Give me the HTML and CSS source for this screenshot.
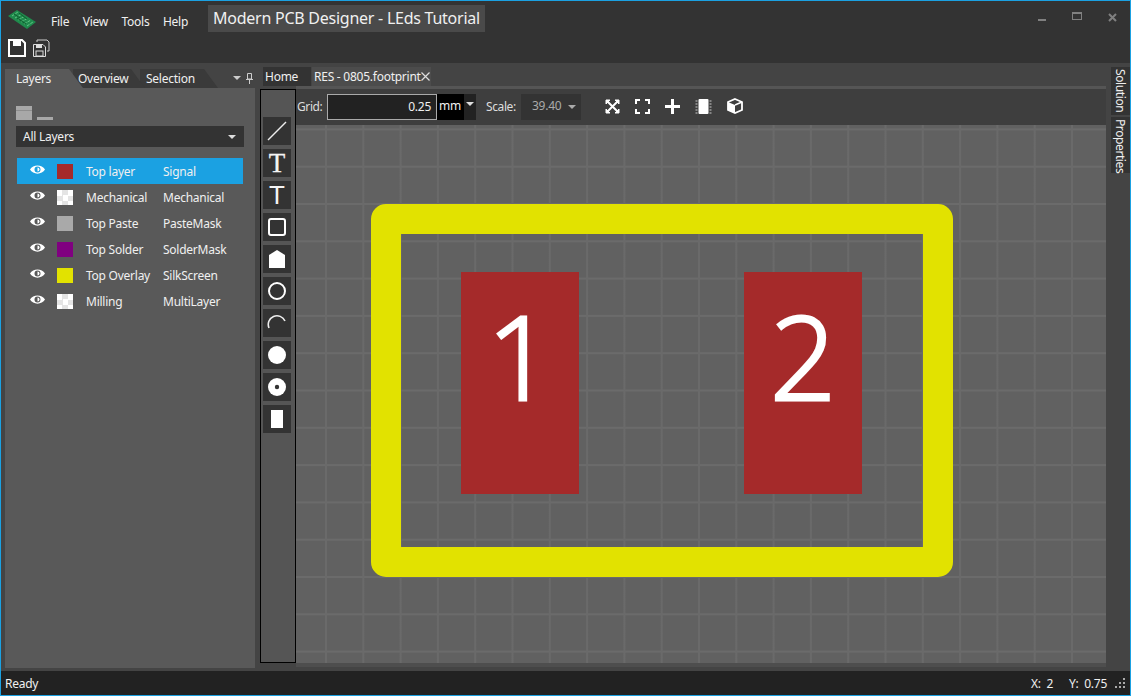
FILE: index.html

```html
<!DOCTYPE html>
<html lang="en">
<head>
    <meta charset="UTF-8">
    <title>Modern PCB Designer - LEds Tutorial</title>
    <link rel="stylesheet" href="styles.css">
</head>
<body>
<div class="window">
    <header class="titlebar">
        <div class="menu-row">
            <svg class="logo" width="28" height="19" viewBox="0 0 28 19">
                <polygon points="0,6 9,0 28,12 19,19" fill="#1f8a4c"/>
                <path d="M4,6 L10,2 M7,8 L14,4 M10,10 L17,6 M13,12 L20,8 M16,14 L23,10 M19,16 L25,12" stroke="#62c585" stroke-width="1" stroke-dasharray="3 1" fill="none"/>
                <path d="M6,4 L12,8 M11,3 L19,9 M9,8 L18,14" stroke="#0d5a2c" stroke-width="1" fill="none"/>
            </svg>
            <nav class="menu">
                <span>File</span>
                <span>View</span>
                <span>Tools</span>
                <span>Help</span>
            </nav>
            <div class="doc-title">Modern PCB Designer - LEds Tutorial</div>
            <div class="win-controls">
                <span class="win-min"></span>
                <span class="win-max"></span>
                <svg width="9" height="9" viewBox="0 0 9 9"><path d="M1,1 L8,8 M8,1 L1,8" stroke="#808080" stroke-width="2"/></svg>
            </div>
        </div>
        <div class="icon-row">
            <svg width="18" height="18" viewBox="0 0 18 18">
                <path d="M1,1 H14 L17,4 V17 H1 Z" fill="none" stroke="#fff" stroke-width="2"/>
                <rect x="5" y="1" width="8" height="6" fill="#fff"/>
            </svg>
            <svg width="18" height="18" viewBox="0 0 18 18">
                <path d="M5,3 V1 H15 L17,3 V12 H15" fill="none" stroke="#ccc"/>
                <path d="M1.5,5.5 H11 L13.5,8 V17.5 H1.5 Z" fill="none" stroke="#ddd"/>
                <rect x="4" y="5" width="6" height="4" fill="#ddd"/>
                <rect x="4" y="12" width="7" height="5" fill="none" stroke="#ddd"/>
            </svg>
        </div>
    </header>

    <main class="workspace">
        <aside class="left-dock">
            <div class="dock-tabs">
                <span class="dock-tab dock-tab-selection">Selection</span>
                <span class="dock-tab dock-tab-overview">Overview</span>
                <span class="dock-tab dock-tab-layers">Layers</span>
                <span class="dock-arrow"></span>
                <svg class="dock-pin" width="7" height="11" viewBox="0 0 7 11"><path d="M1.5,0.5 H5.5 V6 H1.5 Z M0,6.5 H7 M3.5,7 V11" fill="none" stroke="#ccc"/></svg>
            </div>
            <div class="dock-body">
                <div class="layer-tools">
                    <span class="tool-box"></span>
                    <span class="tool-dash"></span>
                </div>
                <div class="layer-select">
                    <span>All Layers</span>
                    <span class="arrow-down"></span>
                </div>
                <ul class="layer-list">
                    <li class="layer selected">
                        <svg class="eye" width="15" height="11" viewBox="0 0 15 11"><use href="#eye-icon"/></svg>
                        <span class="swatch swatch-red"></span>
                        <span class="layer-name">Top layer</span>
                        <span>Signal</span>
                    </li>
                    <li class="layer">
                        <svg class="eye" width="15" height="11" viewBox="0 0 15 11"><use href="#eye-icon"/></svg>
                        <span class="swatch swatch-check"></span>
                        <span class="layer-name">Mechanical</span>
                        <span>Mechanical</span>
                    </li>
                    <li class="layer">
                        <svg class="eye" width="15" height="11" viewBox="0 0 15 11"><use href="#eye-icon"/></svg>
                        <span class="swatch swatch-grey"></span>
                        <span class="layer-name">Top Paste</span>
                        <span>PasteMask</span>
                    </li>
                    <li class="layer">
                        <svg class="eye" width="15" height="11" viewBox="0 0 15 11"><use href="#eye-icon"/></svg>
                        <span class="swatch swatch-purple"></span>
                        <span class="layer-name">Top Solder</span>
                        <span>SolderMask</span>
                    </li>
                    <li class="layer">
                        <svg class="eye" width="15" height="11" viewBox="0 0 15 11"><use href="#eye-icon"/></svg>
                        <span class="swatch swatch-yellow"></span>
                        <span class="layer-name">Top Overlay</span>
                        <span>SilkScreen</span>
                    </li>
                    <li class="layer">
                        <svg class="eye" width="15" height="11" viewBox="0 0 15 11"><use href="#eye-icon"/></svg>
                        <span class="swatch swatch-check"></span>
                        <span class="layer-name">Milling</span>
                        <span>MultiLayer</span>
                    </li>
                </ul>
            </div>
        </aside>

        <section class="document">
            <div class="doc-tabs">
                <span class="doc-tab">Home</span>
                <span class="doc-tab active">RES - 0805.footprint
                    <svg class="tab-close" width="9" height="9" viewBox="0 0 9 9"><path d="M0.5,0.5 L8.5,8.5 M8.5,0.5 L0.5,8.5" stroke="#ddd" stroke-width="1.2"/></svg>
                </span>
            </div>
            <div class="doc-line"></div>
            <div class="doc-body">
                <div class="tool-strip">
                    <button class="tool"><svg width="20" height="20" viewBox="0 0 20 20"><path d="M1,19 L19,1" stroke="#eee" stroke-width="1.4"/></svg></button>
                    <button class="tool"><span class="tool-t tool-t-serif">T</span></button>
                    <button class="tool"><span class="tool-t">T</span></button>
                    <button class="tool"><svg width="20" height="20" viewBox="0 0 20 20"><rect x="2" y="2" width="16" height="16" rx="2" fill="none" stroke="#fff" stroke-width="2"/></svg></button>
                    <button class="tool"><svg width="20" height="20" viewBox="0 0 20 20"><path d="M2,6 L10,1 L18,6 V19 H2 Z" fill="#fff"/></svg></button>
                    <button class="tool"><svg width="20" height="20" viewBox="0 0 20 20"><circle cx="10" cy="10" r="8" fill="none" stroke="#fff" stroke-width="2"/></svg></button>
                    <button class="tool"><svg width="20" height="20" viewBox="0 0 20 20"><path d="M2,15 A8.5,8.5 0 0 1 18,8" fill="none" stroke="#eee" stroke-width="1.6"/></svg></button>
                    <button class="tool"><svg width="20" height="20" viewBox="0 0 20 20"><circle cx="10" cy="10" r="9" fill="#fff"/></svg></button>
                    <button class="tool"><svg width="20" height="20" viewBox="0 0 20 20"><circle cx="10" cy="10" r="9" fill="#fff"/><circle cx="10" cy="10" r="2.2" fill="#333"/></svg></button>
                    <button class="tool"><svg width="20" height="20" viewBox="0 0 20 20"><rect x="4" y="1" width="12" height="18" fill="#fff"/></svg></button>
                </div>
                <div class="editor">
                    <div class="toolbar">
                        <span class="tb-label">Grid:</span>
                        <span class="grid-input">0.25</span>
                        <span class="unit">mm</span>
                        <span class="unit-arrow"><span class="arrow-down"></span></span>
                        <span class="tb-label scale-label">Scale:</span>
                        <span class="scale-select">39.40 <span class="arrow-down dim"></span></span>
                        <div class="tb-icons">
                            <svg width="15" height="15" viewBox="0 0 15 15"><path d="M1,1 H5 L1,5 Z M14,1 H10 L14,5 Z M1,14 H5 L1,10 Z M14,14 H10 L14,10 Z" fill="#fff" stroke="#fff"/><path d="M2,2 L13,13 M13,2 L2,13" stroke="#fff" stroke-width="2"/></svg>
                            <svg width="15" height="15" viewBox="0 0 15 15"><path d="M1,5 V1 H5 M10,1 H14 V5 M14,10 V14 H10 M5,14 H1 V10" fill="none" stroke="#fff" stroke-width="2"/></svg>
                            <svg width="15" height="15" viewBox="0 0 15 15"><path d="M7.5,0 V15 M0,7.5 H15" stroke="#fff" stroke-width="3"/></svg>
                            <svg width="17" height="15" viewBox="0 0 17 15"><rect x="3.5" y="0" width="10" height="15" rx="1" fill="#fff"/><path d="M0.5,2 H2.5 M0.5,5 H2.5 M0.5,8 H2.5 M0.5,11 H2.5 M0.5,14 H2.5 M14.5,2 H16.5 M14.5,5 H16.5 M14.5,8 H16.5 M14.5,11 H16.5 M14.5,14 H16.5" stroke="#ccc"/></svg>
                            <svg width="16" height="16" viewBox="0 0 16 16"><path d="M8,1 L15,4 V12 L8,15 L1,12 V4 Z" fill="#3e3e3e" stroke="#fff" stroke-width="1.8"/><path d="M1,4 L8,7 V15 L1,12 Z" fill="#fff"/><path d="M8,7 L15,4" stroke="#fff" stroke-width="1.4"/></svg>
                        </div>
                    </div>
                    <div class="canvas">
                        <div class="silk"></div>
                        <div class="pad pad-1">1</div>
                        <div class="pad pad-2">2</div>
                    </div>
                    <div class="editor-foot"></div>
                </div>
            </div>
        </section>

        <aside class="right-dock">
            <span class="side-tab side-solution">Solution</span>
            <span class="side-tab side-properties">Properties</span>
        </aside>
    </main>

    <footer class="statusbar">
        <span>Ready</span>
        <div class="status-right">
            <span class="coord-x">X:&nbsp; 2</span>
            <span class="coord-y">Y:&nbsp; 0.75</span>
            <svg width="10" height="10" viewBox="0 0 10 10"><path d="M8,0 h2 v2 h-2 Z M4,4 h2 v2 h-2 Z M8,4 h2 v2 h-2 Z M0,8 h2 v2 h-2 Z M4,8 h2 v2 h-2 Z M8,8 h2 v2 h-2 Z" fill="#aaa"/></svg>
        </div>
    </footer>
</div>

<svg class="defs" width="0" height="0">
    <defs>
        <g id="eye-icon">
            <path fill-rule="evenodd" d="M0,5.5 C3,0 12,0 15,5.5 C12,11 3,11 0,5.5 Z M7.5,2.5 A3,3 0 1 0 7.5,8.5 A3,3 0 1 0 7.5,2.5 Z" fill="#fff"/>
            <path d="M7.5,3.5 A2,2 0 0 1 7.5,7.5 Z" fill="#fff"/>
        </g>
    </defs>
</svg>
</body>
</html>
```

FILE: styles.css

```css
* {
    box-sizing: border-box;
}
html, body {
    margin: 0;
    height: 100%;
    overflow: hidden;
}
body {
    font-family: "Noto Sans", "Open Sans", sans-serif;
    font-size: 12px;
    letter-spacing: -0.25px;
    color: #f0f0f0;
}
.defs {
    position: absolute;
}
.window {
    width: 1131px;
    height: 696px;
    display: flex;
    flex-direction: column;
    border: 1px solid #1ba1e2;
    background: #444;
}

/* title bar */
.titlebar {
    height: 62px;
    background: #333;
    flex: none;
}
.menu-row {
    height: 33px;
    display: flex;
    align-items: center;
    padding-left: 7px;
}
.logo {
    margin-top: 4px;
    flex: none;
}
.menu {
    display: flex;
    gap: 13.5px;
    width: 143px;
    margin-left: 15px;
    margin-top: 7px;
    flex: none;
}
.doc-title {
    margin-left: 14px;
    margin-top: 2px;
    height: 27px;
    width: 277px;
    background: #4a4a4a;
    font-size: 16px;
    line-height: 26px;
    padding-left: 5px;
    white-space: nowrap;
}
.win-controls {
    margin-left: auto;
    margin-right: 13px;
    display: flex;
    align-items: flex-start;
    gap: 26px;
}
.win-min {
    width: 8px;
    height: 2px;
    background: #808080;
    margin-top: 6px;
}
.win-max {
    width: 10px;
    height: 8px;
    border: 1px solid #808080;
    border-top-width: 2px;
    margin-top: -1px;
}
.icon-row {
    display: flex;
    gap: 6px;
    padding: 5px 0 0 7px;
}

/* main */
.workspace {
    flex: 1;
    display: flex;
    min-height: 0;
}

/* left dock */
.left-dock {
    width: 250px;
    margin: 6px 0 3px 4px;
    display: flex;
    flex-direction: column;
    flex: none;
}
.dock-tabs {
    height: 19px;
    display: flex;
}
.dock-tab {
    height: 19px;
    line-height: 19px;
    position: relative;
    clip-path: polygon(0 0, calc(100% - 14px) 0, 100% 100%, 0 100%);
    white-space: nowrap;
}
.dock-tab-layers {
    order: 1;
    width: 78px;
    background: #595959;
    padding-left: 11px;
    z-index: 3;
}
.dock-tab-overview {
    order: 2;
    width: 72px;
    margin-left: -10px;
    background: #3a3a3a;
    padding-left: 5px;
    z-index: 2;
}
.dock-tab-selection {
    order: 3;
    width: 78px;
    margin-left: -5px;
    background: #3a3a3a;
    padding-left: 6px;
    z-index: 1;
}
.dock-arrow {
    order: 4;
    width: 0;
    height: 0;
    margin: 7px 0 0 15px;
    border-left: 4px solid transparent;
    border-right: 4px solid transparent;
    border-top: 4px solid #ccc;
}
.dock-pin {
    order: 5;
    margin: 4px 0 0 5px;
}
.dock-body {
    flex: 1;
    background: #595959;
    padding: 17px 11px 0 11px;
}
.layer-tools {
    height: 15px;
    display: flex;
    align-items: flex-end;
    gap: 5px;
}
.tool-box {
    width: 16px;
    height: 14px;
    background: linear-gradient(#a8a8a8 0 4px, #8e8e8e 4px 5px, #a8a8a8 5px);
}
.tool-dash {
    width: 16px;
    height: 3px;
    background: #a8a8a8;
}
.layer-select {
    height: 21px;
    margin-top: 6px;
    width: 228px;
    background: #333;
    display: flex;
    align-items: center;
    justify-content: space-between;
    padding: 0 8px 0 7px;
}
.arrow-down {
    display: inline-block;
    width: 0;
    height: 0;
    border-left: 4px solid transparent;
    border-right: 4px solid transparent;
    border-top: 4px solid #ddd;
}
.arrow-down.dim {
    border-top-color: #aaa;
    margin-left: 4px;
    vertical-align: 1px;
}
.layer-list {
    list-style: none;
    margin: 11px 0 0 1px;
    padding: 0;
    width: 226px;
}
.layer {
    height: 26px;
    display: flex;
    align-items: center;
    padding-left: 13px;
}
.layer.selected {
    background: #1ba1e2;
}
.eye {
    flex: none;
    margin-top: -3px;
}
.swatch {
    width: 16px;
    height: 15px;
    margin-left: 12px;
    flex: none;
}
.swatch-red {
    background: #a52a2a;
}
.swatch-grey {
    background: #a9a9a9;
}
.swatch-purple {
    background: #800080;
}
.swatch-yellow {
    background: #e2e200;
}
.swatch-check {
    background: repeating-conic-gradient(#e4e4e4 0 25%, #fff 0 50%) 0 0 / 11px 11px;
}
.layer-name {
    width: 77px;
    margin-left: 13px;
    white-space: nowrap;
}

/* document */
.document {
    margin: 4px 0 0 5px;
    width: 846px;
    flex: none;
    display: flex;
    flex-direction: column;
}
.doc-tabs {
    height: 19px;
    display: flex;
    gap: 1px;
    padding-left: 3px;
}
.doc-tab {
    height: 19px;
    line-height: 19px;
    background: #333;
    width: 48px;
    padding-left: 2px;
    white-space: nowrap;
}
.doc-tab.active {
    background: #4c4c4c;
    width: 119px;
    display: flex;
    align-items: center;
    justify-content: space-between;
    padding-right: 1px;
}
.tab-close {
    flex: none;
}
.doc-line {
    height: 3px;
    background: #555;
    margin-left: 36px;
}
.doc-body {
    flex: 1;
    display: flex;
    min-height: 0;
}
.tool-strip {
    width: 36px;
    height: 574px;
    border: 1px solid #000;
    background: #555;
    padding: 27px 2px 0 2px;
    display: flex;
    flex-direction: column;
    gap: 4px;
    flex: none;
}
.tool {
    width: 28px;
    height: 28px;
    border: 0;
    padding: 0;
    background: #333;
    display: flex;
    align-items: center;
    justify-content: center;
}
.tool-t {
    font-family: "Liberation Sans", sans-serif;
    font-size: 26px;
    line-height: 28px;
    color: #f4f4f4;
}
.tool-t-serif {
    font-family: "Liberation Serif", serif;
    font-size: 27px;
    -webkit-text-stroke: 0.3px #f4f4f4;
}
.editor {
    flex: 1;
    min-width: 0;
    display: flex;
    flex-direction: column;
}
.toolbar {
    height: 36px;
    background: #3e3e3e;
    display: flex;
    align-items: center;
    padding-left: 1px;
    flex: none;
}
.tb-label {
    width: 30px;
    color: #ddd;
    margin-top: -2px;
    letter-spacing: -0.4px;
}
.scale-label {
    margin-left: 10px;
    width: 35px;
}
.grid-input {
    width: 110px;
    height: 26px;
    background: #222;
    border: 1px solid #aaa;
    text-align: right;
    line-height: 23px;
    padding-right: 5px;
}
.unit {
    width: 27px;
    height: 26px;
    background: #000;
    line-height: 24px;
    padding-left: 2px;
}
.unit-arrow {
    width: 12px;
    height: 26px;
    background: #222;
    padding-left: 2px;
    line-height: 16px;
}
.scale-select {
    width: 60px;
    height: 26px;
    background: #333;
    color: #aaa;
    line-height: 24px;
    padding-left: 11px;
    white-space: nowrap;
}
.tb-icons {
    display: flex;
    align-items: center;
    gap: 15px;
    margin-left: 24px;
    margin-top: -2px;
}
.canvas {
    position: relative;
    height: 538px;
    flex: none;
    overflow: hidden;
    background-color: #616161;
    background-image:
        repeating-linear-gradient(90deg, transparent 0 28.5px, #6a6a6a 29.5px 30.5px, transparent 31.5px 37.3px),
        repeating-linear-gradient(180deg, transparent 0 2.9px, #6b6b6b 3.9px 4.9px, transparent 5.9px 37.3px);
}
.editor-foot {
    height: 4px;
    background: #4e4e4e;
}
.silk {
    position: absolute;
    left: 75px;
    top: 79px;
    width: 582px;
    height: 373px;
    border: 30px solid #e2e200;
    border-radius: 15px;
}
.pad {
    position: absolute;
    top: 147px;
    width: 118px;
    height: 222px;
    background: #a52a2a;
    color: #fff;
    font-family: "Open Sans", sans-serif;
    font-weight: 300;
    font-size: 116px;
    line-height: 166px;
    text-align: center;
    -webkit-text-stroke: 3px #fff;
}
.pad-1 {
    left: 165px;
}
.pad-2 {
    left: 448px;
}

/* right dock */
.right-dock {
    flex: 1;
    padding: 4px 0 0 5px;
    display: flex;
    flex-direction: column;
    gap: 2px;
}
.side-tab {
    writing-mode: vertical-rl;
    background: #333;
    line-height: 19px;
    width: 19px;
    white-space: nowrap;
    padding-top: 2px;
    letter-spacing: -0.4px;
}
.side-solution {
    height: 48px;
}
.side-properties {
    height: 56px;
}

/* status bar */
.statusbar {
    height: 24px;
    flex: none;
    background: #222;
    display: flex;
    align-items: center;
    padding: 0 5px 0 4px;
}
.status-right {
    margin-left: auto;
    display: flex;
    align-items: center;
}
.coord-x {
    width: 38px;
}
.coord-y {
    width: 46px;
}
```
